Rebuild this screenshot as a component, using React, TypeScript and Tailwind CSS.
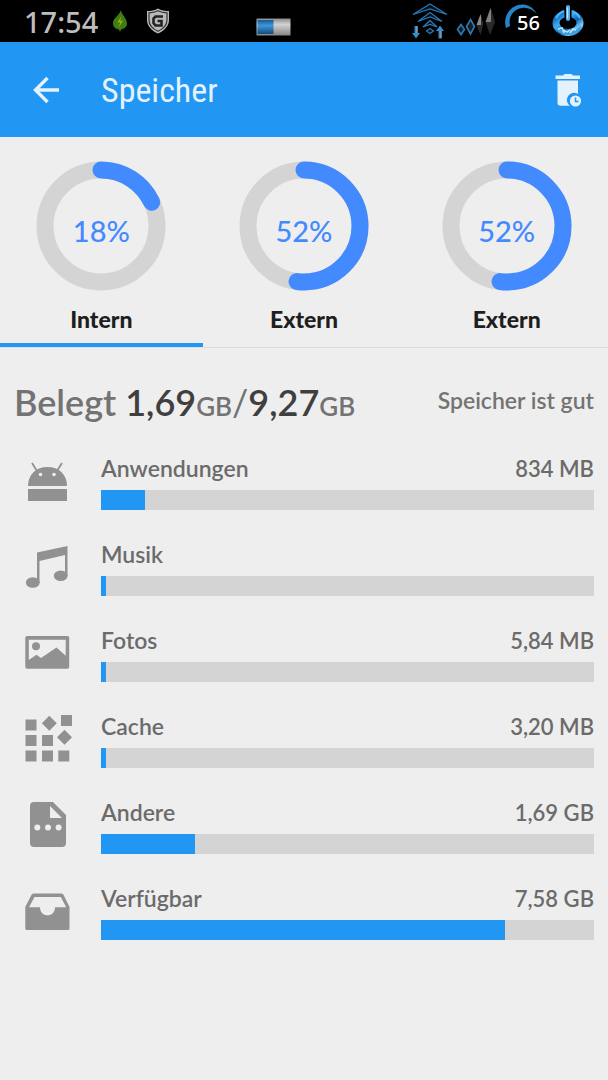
import React from "react";

interface Volume {
  id: string;
  name: string;
  percent: number;
}

interface Category {
  name: string;
  size: string;
  percent: number;
  icon: React.ReactNode;
}

const volumes: Volume[] = [
  { id: "internal", name: "Intern", percent: 18 },
  { id: "external-1", name: "Extern", percent: 52 },
  { id: "external-2", name: "Extern", percent: 52 },
];

const categories: Category[] = [
  {
    name: "Anwendungen",
    size: "834 MB",
    percent: 9,
    icon: (
      <>
        <path d="M7 31C7 19.500 15 12 26.500 12S46 19.500 46 31Z" />
        <path d="M7 34h39v12H7Z" />
        <path d="M11 8l5 8M41 8l-5 8" fill="none" stroke="#919191" strokeWidth="1.800" />
        <circle cx="19.500" cy="19.500" fill="#eee" r="1.800" />
        <circle cx="33" cy="19.500" fill="#eee" r="1.800" />
      </>
    ),
  },
  {
    name: "Musik",
    size: "",
    percent: 1,
    icon: (
      <>
        <path d="M16 11.500 46.500 5V35H44V14L18.500 20V42H16Z" />
        <ellipse cx="11.800" cy="41.500" rx="6.900" ry="5.300" />
        <ellipse cx="39.700" cy="34.800" rx="6.900" ry="5.300" />
      </>
    ),
  },
  {
    name: "Fotos",
    size: "5,84 MB",
    percent: 1,
    icon: (
      <>
        <path
          d="M6 9H46.500Q48.200 9 48.200 10.700V40Q48.200 41.700 46.500 41.700H6Q4.300 41.700 4.300 40V10.700Q4.300 9 6 9ZM7.800 12.800V33L15.500 27.800 20 31 35.500 20.500 44.700 28.800V12.800Z"
          fillRule="evenodd"
        />
        <circle cx="15" cy="19.200" r="4" />
      </>
    ),
  },
  {
    name: "Cache",
    size: "3,20 MB",
    percent: 1,
    icon: (
      <path d="M4.500 6.500h11v11h-11ZM4.500 22h11v11h-11ZM4.500 37.500h11v11h-11ZM21 22h11v11H21ZM21 37.500h11v11H21ZM37.300 37.500h11v11h-11ZM40 2h11v11H40ZM28.300 2.800l7.500 7.500-7.500 7.500-7.500-7.500ZM43.500 16.700l7.500 7.500-7.500 7.500-7.500-7.500Z" />
    ),
  },
  {
    name: "Andere",
    size: "1,69 GB",
    percent: 19,
    icon: (
      <>
        <path
          d="M13 3H32L45 16V44Q45 48 41 48H13Q9 48 9 44V7Q9 3 13 3ZM29 7V19H41Z"
          fillRule="evenodd"
        />
        <circle cx="16.300" cy="28.500" fill="#eee" r="3" />
        <circle cx="27" cy="28.500" fill="#eee" r="3" />
        <circle cx="37.600" cy="28.500" fill="#eee" r="3" />
      </>
    ),
  },
  {
    name: "Verfügbar",
    size: "7,58 GB",
    percent: 82,
    icon: (
      <path
        d="M12.500 8.500H40.500Q42 8.500 42.600 10L48.500 22V43.500Q48.500 45 47 45H6Q4.300 45 4.300 43.500V22L10.400 10Q11 8.500 12.500 8.500ZM13.500 12 8 22.300H19C19 33 34 33 34 22.300H45.200L39.800 12Z"
        fillRule="evenodd"
      />
    ),
  },
];

const StatusBar: React.FC = () => {
  return (
    <div className="flex items-center h-[42px] bg-black px-6 text-[#bdbdbd]">
      <span className="w-[74px] text-[29px] leading-none font-medium font-['Noto_Sans',sans-serif]">
        17:54
      </span>
      <svg aria-hidden="true" className="ml-3.5 h-[22px] w-4" viewBox="0 0 16 22">
        <path d="M9 0C9.500 5 15 8 15 13.500 15 17 12 19 9 19.500L8 22 7 19.500C3.500 19 1 17 1 13 1 8 7 6 9 0Z" fill="#3f7d16" />
        <path d="M9.500 6 5.500 12.500l3-.5-2 6 4.500-7.500-3 .5Z" fill="#a8b400" />
      </svg>
      <svg aria-hidden="true" className="ml-[18px] h-[26px] w-6" viewBox="0 0 24 26">
        <path d="M12 .5C15 2.500 19 3 23 3V12C23 18 18 23 12 25.500 6 23 1 18 1 12V3C5 3 9 2.500 12 .5Z" fill="#b9b9b9" />
        <path d="M12 2.800C15 4.300 18 4.800 21 4.900V12C21 17 17 21 12 23.300 7 21 3 17 3 12V4.900C6 4.800 9 4.300 12 2.800Z" fill="none" stroke="#333" strokeWidth="1.200" />
        <path d="M17 8.500H9.500L7.500 10.500V15L9.500 17.500H15.500V13H11.500" fill="none" stroke="#222" strokeWidth="2.600" />
      </svg>
      <svg aria-hidden="true" className="mt-3 ml-[86px] h-[18px] w-[35px]" viewBox="0 0 35 18">
        <defs>
          <linearGradient id="battery-shell" x1="0" x2="0" y1="0" y2="1">
            <stop offset="0" stopColor="#8a8a8a" />
            <stop offset="0.350" stopColor="#d2d2d2" />
            <stop offset="1" stopColor="#858585" />
          </linearGradient>
          <linearGradient id="battery-fill" x1="0" x2="0" y1="0" y2="1">
            <stop offset="0" stopColor="#1b5b91" />
            <stop offset="0.400" stopColor="#3c98dc" />
            <stop offset="1" stopColor="#164a78" />
          </linearGradient>
        </defs>
        <rect fill="url(#battery-shell)" height="17" width="34" x="0.500" y="0.500" />
        <rect fill="url(#battery-fill)" height="14" width="16" x="1.500" y="2" />
      </svg>

      <div className="flex items-center ml-auto">
        <svg aria-hidden="true" className="h-9 w-9" viewBox="0 0 36 36">
          <g fill="#04101b" stroke="#2877b5" strokeWidth="1.300">
            <path d="M18 1 35 11.500 18 6 1 11.500Z" />
            <path d="M18 9.500 30 18.500 18 14 6 18.500Z" />
            <path d="M18 17.500 25 24 18 21.500 11 24Z" />
            <path d="M18 25.500 21.500 28 18 30.500 14.500 28Z" />
          </g>
          <path d="M2.500 23h3v7H8l-4 5.500L0 30h2.500Z" fill="#338ccc" />
          <path d="M26.500 35.500h3V28H32l-4-5.500-4 5.500h2.500Z" fill="#338ccc" />
          <path d="M5 23v7M29 28v7" stroke="#aaa" />
        </svg>
        <svg aria-hidden="true" className="ml-2 h-[30px] w-10" viewBox="0 0 40 30">
          <path d="M5 18.500 8.500 23.500 5 28.500 1.500 23.500Z" fill="#1c1c1c" stroke="#287cba" strokeWidth="1.600" />
          <path d="M14.500 13.500 18.500 20.500 14.500 28 10.500 20.500Z" fill="#1c1c1c" stroke="#287cba" strokeWidth="1.600" />
          <path d="M24.500 8 27 19H20.500Z" fill="#8a8a8a" />
          <path d="M25 9 27 19H25ZM20.500 19h6.500l-2.500 10Z" fill="#2a2a2a" />
          <path d="M34.500 2 38 16H29.500Z" fill="#808080" />
          <path d="M35 3 39 16H35ZM29.500 16H39l-5 13Z" fill="#2a2a2a" />
        </svg>
        <div className="relative ml-2 h-9 w-9">
          <svg aria-hidden="true" className="h-9 w-9" viewBox="0 0 36 36">
            <path d="M2 25C-2 12 8 1 19 1.500 26 2 30 6 33 11 28 6 23 4 18 5 10 6 4 13 6 23Z" fill="#2583c9" />
          </svg>
          <span className="absolute right-0 bottom-1.5 text-xl leading-none font-medium text-white font-['Noto_Sans',sans-serif]">
            56
          </span>
        </div>
        <svg aria-hidden="true" className="ml-3 h-8 w-8" viewBox="0 0 32 32">
          <defs>
            <linearGradient id="power" x1="0" x2="1" y1="0" y2="1">
              <stop offset="0" stopColor="#0759a1" />
              <stop offset="0.350" stopColor="#43adf5" />
              <stop offset="0.600" stopColor="#0b5fae" />
              <stop offset="0.850" stopColor="#8bd4ff" />
              <stop offset="1" stopColor="#176ab2" />
            </linearGradient>
          </defs>
          <ellipse cx="16" cy="18" fill="none" rx="12" ry="9.500" stroke="url(#power)" strokeWidth="7" />
          <path d="M3 20Q4 29 16 30T29 20L25 24Q16 29 7 24Z" fill="#3e9fe0" />
          <path d="M6 24l4-1 2 5M18 28l3-4 3 1M11 25l4 2 3-2" fill="none" stroke="#b9e5ff" strokeWidth="1.500" />
          <path d="M4 13Q7 8 12 6M20 6Q25 8 28 13" fill="none" stroke="#4db8fa" strokeWidth="2" />
          <path d="M16 1V15" stroke="#000" strokeLinecap="round" strokeWidth="7" />
          <path d="M16 2V14" stroke="#4eaceb" strokeLinecap="round" strokeWidth="4" />
          <path d="M15.500 3V13" stroke="#bfe6ff" strokeLinecap="round" strokeWidth="1.300" />
        </svg>
      </div>
    </div>
  );
};

const Header: React.FC = () => {
  return (
    <header className="flex items-center h-[95px] bg-[#2196f3] pr-6 pl-[22px] text-[#e3f2fd]">
      <button aria-label="Zurück" className="flex size-12 items-center justify-center" type="button">
        <svg className="h-7 w-7" viewBox="0 0 28 28">
          <path d="M15.500 2 3.500 14l12 12M3.500 14H27" fill="none" stroke="currentColor" strokeWidth="3.400" />
        </svg>
      </button>
      <h1 className="ml-[31px] text-[34px] leading-10 font-['Roboto_Condensed',Roboto,sans-serif]">
        Speicher
      </h1>
      <button aria-label="Bereinigen" className="ml-auto flex h-12 w-8 items-center justify-center" type="button">
        <svg className="h-9 w-8 shrink-0" viewBox="0 0 32 36">
          <path d="M3.500 3.500H11L12.500 2H19.500L21 3.500H28V7H3.500ZM5.500 8.500H26V22A7 7 0 0 0 18 33.800H8.500Q5.500 33.800 5.500 30.800Z" fill="currentColor" />
          <circle cx="23.500" cy="29" fill="currentColor" r="5.600" />
          <path d="M23.500 25.500V29.500H26.500" fill="none" stroke="#2196f3" strokeWidth="1.500" />
        </svg>
      </button>
    </header>
  );
};

const Ring: React.FC<{ percent: number }> = ({ percent }) => {
  return (
    <div className="relative size-[130px]">
      <svg aria-hidden="true" className="size-full -rotate-90" viewBox="0 0 130 130">
        <circle cx="65" cy="65" fill="none" r="56" stroke="#d4d4d4" strokeWidth="17" />
        <circle
          cx="65"
          cy="65"
          fill="none"
          pathLength={100}
          r="56"
          stroke="#448aff"
          strokeDasharray={`${percent} 100`}
          strokeLinecap="round"
          strokeWidth="17"
        />
      </svg>
      <span className="absolute inset-0 flex items-center justify-center pt-2.5 text-[29px] font-medium text-[#448aff]">
        {percent}%
      </span>
    </div>
  );
};

const App: React.FC = () => {
  return (
    <div className="min-h-screen bg-[#eee] font-['Lato',sans-serif] text-[#737373]">
      <StatusBar />
      <Header />

      <div className="grid grid-cols-3 border-b border-[#ddd]" role="tablist">
        {volumes.map((volume, index) => (
          <button
            key={volume.id}
            aria-selected={index === 0}
            className={
              index === 0
                ? "flex flex-col items-center border-b-4 border-[#2196f3] pt-6"
                : "flex flex-col items-center border-b-4 border-transparent pt-6"
            }
            role="tab"
            type="button"
          >
            <Ring percent={volume.percent} />
            <span className="mt-3 mb-2 text-[23px] leading-8 font-black text-[#1e1e1e]">
              {volume.name}
            </span>
          </button>
        ))}
      </div>

      <main className="pr-3.5">
        {/* Summary */}
        <div className="flex items-center justify-between pt-8 pl-3.5 whitespace-nowrap">
          <h2 className="text-[36px] leading-11 font-semibold">
            Belegt <span className="text-[#3f3f3f]">1,69</span>
            <span className="text-[26px]">GB</span>
            <span className="font-normal">/</span>
            <span className="text-[#3f3f3f]">9,27</span>
            <span className="text-[26px]">GB</span>
          </h2>
          <p className="pb-2 text-[23px] font-semibold">Speicher ist gut</p>
        </div>

        {/* Usage per category */}
        <ul className="mt-[27px] flex flex-col gap-[31px]">
          {categories.map((category) => (
            <li key={category.name} className="flex">
              <svg
                aria-hidden="true"
                className="ml-[21px] mr-7 size-[52px] shrink-0 fill-[#919191]"
                viewBox="0 0 52 52"
              >
                {category.icon}
              </svg>
              <div className="grow">
                <div className="flex h-[35px] items-center justify-between pb-2 font-semibold text-[#6b6b6b]">
                  <span className="text-[23px]">{category.name}</span>
                  <span className="text-[22px]">{category.size}</span>
                </div>
                <div className="h-5 bg-[#d4d4d4]">
                  <div className="h-full bg-[#2196f3]" style={{ width: `${category.percent}%` }} />
                </div>
              </div>
            </li>
          ))}
        </ul>
      </main>
    </div>
  );
};

export default App;
